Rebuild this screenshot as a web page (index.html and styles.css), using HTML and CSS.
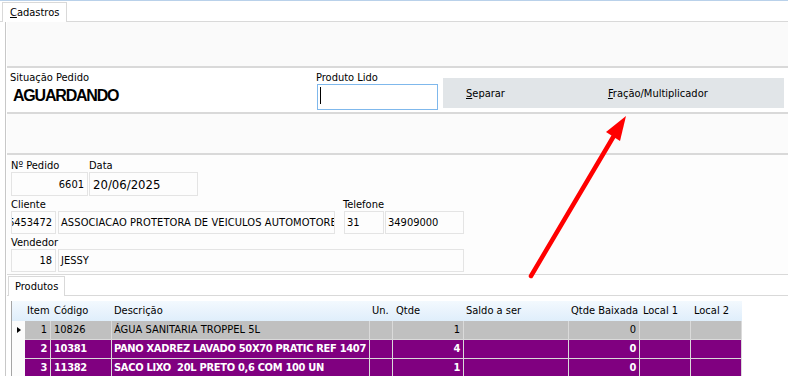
FILE: index.html
```html
<!DOCTYPE html>
<html lang="pt-BR">
<head>
<meta charset="utf-8">
<title>Cadastros</title>
<link rel="stylesheet" href="styles.css">
</head>
<body>
<div class="app">
  <div class="tabstrip">
    <div class="tab"><u>C</u>adastros</div>
  </div>
  <div class="panel">
    <div class="sec s1"></div>
    <div class="sec s2">
      <div class="status">
        <div class="lbl">Situação Pedido</div>
        <div class="big">AGUARDANDO</div>
      </div>
      <div class="prod">
        <div class="lbl">Produto Lido</div>
        <div class="input"><span class="caret"></span></div>
      </div>
      <div class="btnbar">
        <span class="btn sep"><u>S</u>eparar</span>
        <span class="btn frac"><u>F</u>ração/Multiplicador</span>
      </div>
    </div>
    <div class="sec s3"></div>
    <div class="sec s4">
      <div class="frow">
        <div class="fgroup">
          <div class="lbl">Nº Pedido</div>
          <div class="box w-ped right">6601</div>
        </div>
        <div class="fgroup">
          <div class="lbl">Data</div>
          <div class="box w-date date">20/06/2025</div>
        </div>
      </div>
      <div class="frow">
        <div class="fgroup">
          <div class="lbl">Cliente</div>
          <div class="boxes">
            <div class="box w-code right">6453472</div>
            <div class="box w-cli">ASSOCIACAO PROTETORA DE VEICULOS AUTOMOTORE</div>
          </div>
        </div>
        <div class="fgroup tel">
          <div class="lbl">Telefone</div>
          <div class="boxes">
            <div class="box w-ddd">31</div>
            <div class="box w-fone">34909000</div>
          </div>
        </div>
      </div>
      <div class="frow">
        <div class="fgroup">
          <div class="lbl">Vendedor</div>
          <div class="boxes">
            <div class="box w-code right">18</div>
            <div class="box w-vend">JESSY</div>
          </div>
        </div>
      </div>
    </div>
    <div class="tabstrip2">
      <div class="tab2">Produtos</div>
    </div>
    <div class="gridwrap">
      <div class="grid">
        <div class="gr head">
          <div class="c ind"></div>
          <div class="c item">Item</div>
          <div class="c cod">Código</div>
          <div class="c desc">Descrição</div>
          <div class="c un">Un.</div>
          <div class="c qt">Qtde</div>
          <div class="c saldo">Saldo a ser</div>
          <div class="c baix">Qtde Baixada</div>
          <div class="c loc">Local 1</div>
          <div class="c loc">Local 2</div>
        </div>
        <div class="gr sel">
          <div class="c ind"><span class="tri"></span></div>
          <div class="c item r">1</div>
          <div class="c cod">10826</div>
          <div class="c desc">ÁGUA SANITARIA TROPPEL 5L</div>
          <div class="c un"></div>
          <div class="c qt r">1</div>
          <div class="c saldo"></div>
          <div class="c baix r">0</div>
          <div class="c loc"></div>
          <div class="c loc"></div>
        </div>
        <div class="gr purple">
          <div class="c ind"></div>
          <div class="c item r">2</div>
          <div class="c cod">10381</div>
          <div class="c desc">PANO XADREZ LAVADO 50X70 PRATIC REF 1407</div>
          <div class="c un"></div>
          <div class="c qt r">4</div>
          <div class="c saldo"></div>
          <div class="c baix r">0</div>
          <div class="c loc"></div>
          <div class="c loc"></div>
        </div>
        <div class="gr purple">
          <div class="c ind"></div>
          <div class="c item r">3</div>
          <div class="c cod">11382</div>
          <div class="c desc">SACO LIXO&nbsp; 20L PRETO 0,6 COM 100 UN</div>
          <div class="c un"></div>
          <div class="c qt r">1</div>
          <div class="c saldo"></div>
          <div class="c baix r">0</div>
          <div class="c loc"></div>
          <div class="c loc"></div>
        </div>
      </div>
    </div>
  </div>
  <svg class="arrow" width="788" height="376" viewBox="0 0 788 376">
    <line x1="531" y1="276" x2="615" y2="134" stroke="#ff0000" stroke-width="4.5" stroke-linecap="round"/>
    <polygon points="626,116 620,141 606,132" fill="#ff0000"/>
  </svg>
</div>
</body>
</html>
```
FILE: styles.css
```css
* { box-sizing: border-box; }
html, body { margin: 0; padding: 0; }
body {
  width: 788px;
  height: 376px;
  overflow: hidden;
  background: #ffffff;
  font-family: "DejaVu Sans Condensed", "Liberation Sans", sans-serif;
  font-size: 11px;
  color: #000;
}
.app {
  position: relative;
  width: 788px;
  height: 376px;
  border-top: 1px solid #b9d1ea;
}
u { text-decoration: underline; text-underline-offset: 1px; }

.tabstrip {
  height: 21px;
  display: flex;
  align-items: flex-end;
  border-bottom: 1px solid #d9d9d9;
  padding-left: 2px;
}
.tab {
  height: 20px;
  margin-bottom: -1px;
  padding: 3px 7px 0 7px;
  width: 65px;
  background: #fff;
  border: 1px solid #d9d9d9;
  border-bottom: none;
  line-height: 13px;
}

.panel {
  margin-left: 5px;
  border-left: 1px solid #c8c8c8;
  padding-left: 1px;
  height: 354px;
}
.sec { border-bottom: 2px solid #d9d9d9; }
.s1 { height: 46px; background: #fafafa; }
.s2 {
  height: 46px;
  background: #ffffff;
  display: flex;
  align-items: flex-start;
  padding: 3px 0 0 3px;
}
.s3 { height: 41px; background: #fbfbfb; }
.s4 {
  height: 120px;
  background: #fdfdfd;
  border-bottom: 1px solid #d9d9d9;
  padding: 5px 0 0 4px;
  display: flex;
  flex-direction: column;
  gap: 3px;
}

.lbl { line-height: 12px; height: 12px; white-space: nowrap; }
.s2 .lbl { line-height: 13px; height: 13px; }

.status { width: 306px; }
.big {
  font-family: "Liberation Sans", sans-serif;
  font-weight: bold;
  font-size: 16px;
  letter-spacing: -1.2px;
  margin: 3px 0 0 3px;
  line-height: 18px;
}
.prod { width: 122px; }
.input {
  margin-left: 1px;
  width: 121px;
  height: 26px;
  border: 1px solid #7fb8ec;
  background: #fff;
  padding: 2px 0 0 2px;
}
.caret { display: block; width: 1px; height: 17px; background: #000; }

.btnbar {
  margin: 7px 0 0 5px;
  width: 341px;
  height: 30px;
  background: #e1e5e8;
  display: flex;
  align-items: center;
  padding-left: 23px;
}
.btn { white-space: nowrap; }
.frac { margin-left: 103px; }

.frow { display: flex; align-items: flex-start; }
.fgroup { display: flex; flex-direction: column; }
.fgroup + .fgroup { margin-left: 1px; }
.fgroup.tel { margin-left: 8px; }
.tel .boxes { margin-left: 1px; gap: 1px; }
.boxes { display: flex; gap: 2px; }
.box {
  height: 23px;
  border: 1px solid #e4e4e4;
  background: #fdfdfd;
  display: flex;
  align-items: center;
  padding: 0 2px;
  white-space: nowrap;
  overflow: hidden;
}
.box.right { justify-content: flex-end; padding-right: 3px; }
.w-ped { width: 77px; height: 24px; }
.w-date { width: 109px; height: 24px; }
.date { font-size: 13px; padding-left: 3px; }
.w-code { width: 45px; }
.w-cli { width: 277px; letter-spacing: 0.1px; }
.w-ddd { width: 40px; }
.w-fone { width: 79px; }
.w-vend { width: 406px; }

.tabstrip2 {
  height: 21px;
  display: flex;
  align-items: flex-end;
  border-bottom: 1px solid #d9d9d9;
  padding-left: 1px;
}
.tab2 {
  height: 20px;
  margin-bottom: -1px;
  width: 57px;
  padding: 3px 0 0 6px;
  border: 1px solid #d9d9d9;
  border-bottom: none;
  background: #fff;
  line-height: 13px;
}

.gridwrap { padding: 5px 0 0 4px; background: #fff; height: 80px; }
.grid {
  width: 731px;
  border-left: 1px solid #a5a5a5;
}
.gr { display: flex; height: 19px; }
.gr.head {
  height: 20px;
  background: linear-gradient(#f3f9fe, #dfeefb);
}
.c {
  flex: none;
  height: 100%;
  line-height: 18px;
  padding: 0 2px;
  white-space: nowrap;
  overflow: hidden;
  border-right: 1px solid #dadada;
  border-bottom: 1px solid #dadada;
}
.head .c { border-color: transparent; line-height: 19px; }
.c.r { text-align: right; padding-right: 3px; }
.ind { width: 13px; background: #fcfcfc; border-right: none; border-bottom-color: #fcfcfc; position: relative; padding: 0; }
.head .ind { background: transparent; }
.item { width: 26px; }
.cod { width: 61px; padding-left: 3px; }
.desc { width: 258px; }
.un { width: 23px; }
.qt { width: 71px; padding-left: 3px; }
.saldo { width: 105px; }
.baix { width: 71px; }
.loc { width: 51px; padding-left: 3px; }

.sel .c:not(.ind) { background: #c0c0c0; }
.purple .c:not(.ind) { background: #800080; color: #fff; font-weight: bold; letter-spacing: -0.3px; }

.tri {
  position: absolute;
  left: 5px;
  top: 6px;
  width: 0;
  height: 0;
  border-top: 3.5px solid transparent;
  border-bottom: 3.5px solid transparent;
  border-left: 4px solid #000;
}

.arrow {
  position: absolute;
  left: 0;
  top: -1px;
  pointer-events: none;
}
```
